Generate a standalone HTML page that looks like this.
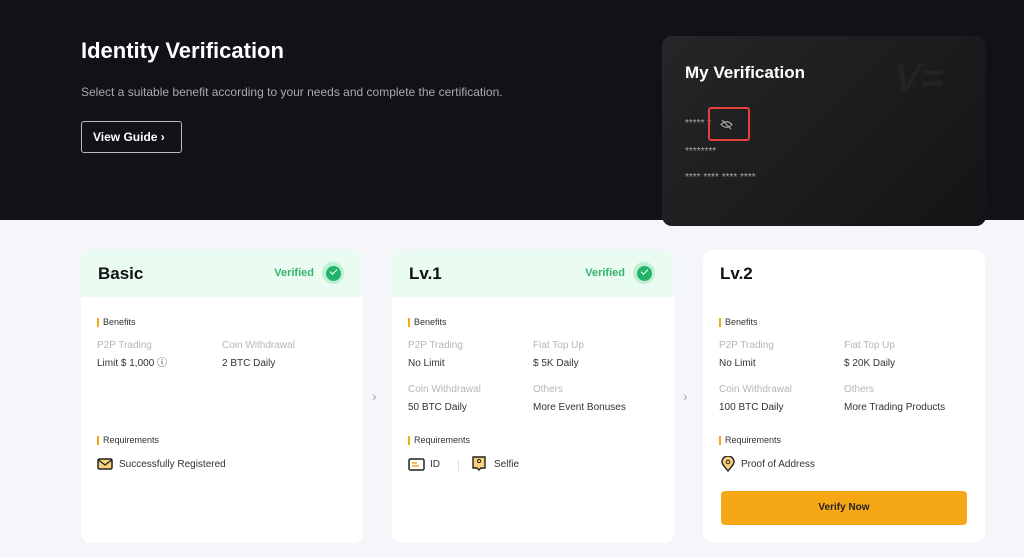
<!DOCTYPE html>
<html><head><meta charset="utf-8"><style>
*{box-sizing:border-box;margin:0;padding:0}
body{width:1024px;height:557px;overflow:hidden;background:#f5f6fa;font-family:"Liberation Sans",sans-serif;position:relative}
.hdr{position:absolute;left:0;top:0;width:1024px;height:220px;background:#111118;overflow:hidden}
.hdr h1{position:absolute;left:81px;top:38px;color:#fff;font-size:22px;font-weight:bold}
.hdr p{position:absolute;left:81px;top:85px;color:#a9a9b2;font-size:12px}
.btn{position:absolute;left:81px;top:121px;width:101px;height:32px;border:1px solid #bbb;border-radius:3px;color:#fff;font-size:12px;font-weight:bold;line-height:30px;padding-left:11px}
.mv{position:absolute;left:662px;top:36px;width:324px;height:190px;border-radius:10px;background:linear-gradient(135deg,#262628,#141416);color:#fff}
.mv h2{position:absolute;left:23px;top:27px;font-size:17px;font-weight:bold}
.st{position:absolute;left:23px;color:#aaa;font-size:10px;letter-spacing:0}
.card{position:absolute;top:250px;width:282px;height:293px;background:#fff;border-radius:10px;overflow:hidden}
.ch{height:47px;padding:14px 17px;font-size:17px;font-weight:bold;color:#111;position:relative}
.ch.g{background:#eafbf2}
.ver{position:absolute;right:19px;top:12px;color:#35b46f;font-size:11px;font-weight:bold;display:flex;align-items:center;gap:8px}
.ck{width:22px;height:22px;border-radius:50%;background:#bff0d4;display:flex;align-items:center;justify-content:center}
.ck i{width:15px;height:15px;border-radius:50%;background:#23b46a;display:block;position:relative}
.ck i:after{content:"";position:absolute;left:4px;top:3px;width:6px;height:3px;border-left:1.5px solid #fff;border-bottom:1.5px solid #fff;transform:rotate(-45deg)}
.lbl{position:absolute;left:16px;font-size:9px;color:#333;border-left:2px solid #f6a716;padding-left:4px;line-height:9px}
.k{position:absolute;font-size:10px;color:#b5b5bd;line-height:12px}
.v{position:absolute;font-size:10px;color:#333;line-height:12px}
.arr{position:absolute;top:388px;color:#aaa;font-size:14px}
.vbtn{position:absolute;left:18px;top:241px;width:246px;height:34px;background:#f6a716;border-radius:4px;font-size:10px;font-weight:bold;color:#222;text-align:center;line-height:34px}
</style></head><body>
<div class="hdr">
<svg width="1024" height="220" style="position:absolute;left:0;top:0" opacity="0.07"><g stroke="#888" stroke-width="0.5">
<path d="M200 0V220M205 0V220M210 0V220M215 0V220M220 0V220M225 0V220M230 0V220M235 0V220M240 0V220M245 0V220M250 0V220M255 0V220M260 0V220M265 0V220M270 0V220M275 0V220M280 0V220M285 0V220M290 0V220M295 0V220M300 0V220"/>
<path d="M300 220L520 20M308 220L528 20M316 220L536 20M324 220L544 20M332 220L552 20M340 220L560 20M348 220L568 20M356 220L576 20"/></g></svg>
<h1>Identity Verification</h1>
<p>Select a suitable benefit according to your needs and complete the certification.</p>
<div class="btn">View Guide ›</div>
</div>
<div class="mv"><h2>My Verification</h2>
<div style="position:absolute;left:232px;top:20px;font-size:40px;font-weight:bold;font-style:italic;color:#232325">V<span style="font-style:normal">=</span></div>
<div class="st" style="top:82px">***** *</div>
<svg style="position:absolute;left:58px;top:83px" width="13" height="11" viewBox="0 0 14 12"><path d="M1 6Q7 0 13 6Q7 12 1 6Z M2 1L12 11" fill="none" stroke="#aaa" stroke-width="1.2"/></svg>
<div style="position:absolute;left:46px;top:71px;width:42px;height:34px;border:2px solid #e5403c;border-radius:3px"></div>
<div class="st" style="top:110px">********</div>
<div class="st" style="top:136px">**** **** **** ****</div>
</div>

<div class="card" style="left:81px">
<div class="ch g">Basic<div class="ver">Verified<div class="ck"><i></i></div></div></div>
<div class="lbl" style="top:68px">Benefits</div>
<div class="k" style="left:16px;top:90px">P2P Trading</div><div class="v" style="left:16px;top:108px">Limit $ 1,000 ⓘ</div>
<div class="k" style="left:141px;top:90px">Coin Withdrawal</div><div class="v" style="left:141px;top:108px">2 BTC Daily</div>
<div class="lbl" style="top:186px">Requirements</div>
<svg style="position:absolute;left:16px;top:208px" width="16" height="12"><rect x="1" y="1" width="14" height="10" rx="1.5" fill="#fbd27a" stroke="#222" stroke-width="1.5"/><path d="M1.5 2L8 7L14.5 2" fill="none" stroke="#222" stroke-width="1.3"/></svg>
<div class="v" style="left:38px;top:209px">Successfully Registered</div>
</div>
<div class="arr" style="left:372px">›</div>

<div class="card" style="left:392px">
<div class="ch g">Lv.1<div class="ver">Verified<div class="ck"><i></i></div></div></div>
<div class="lbl" style="top:68px">Benefits</div>
<div class="k" style="left:16px;top:90px">P2P Trading</div><div class="v" style="left:16px;top:108px">No Limit</div>
<div class="k" style="left:141px;top:90px">Fiat Top Up</div><div class="v" style="left:141px;top:108px">$ 5K Daily</div>
<div class="k" style="left:16px;top:134px">Coin Withdrawal</div><div class="v" style="left:16px;top:152px">50 BTC Daily</div>
<div class="k" style="left:141px;top:134px">Others</div><div class="v" style="left:141px;top:152px">More Event Bonuses</div>
<div class="lbl" style="top:186px">Requirements</div>
<svg style="position:absolute;left:16px;top:208px" width="17" height="13"><rect x="1" y="1" width="15" height="11" rx="1.5" fill="#fff" stroke="#222" stroke-width="1.5"/><path d="M4 5H9M4 8H11" stroke="#f6a716" stroke-width="1.5"/></svg>
<div class="v" style="left:38px;top:209px">ID</div>
<div style="position:absolute;left:66px;top:210px;width:1px;height:11px;background:#ddd"></div>
<svg style="position:absolute;left:80px;top:206px" width="14" height="16"><path d="M1 1H13V12H9L7 14L5 12H1Z" fill="#fbd27a" stroke="#222" stroke-width="1.4"/><circle cx="7" cy="5" r="1.6" fill="none" stroke="#222"/></svg>
<div class="v" style="left:102px;top:209px">Selfie</div>
</div>
<div class="arr" style="left:683px">›</div>

<div class="card" style="left:703px">
<div class="ch">Lv.2</div>
<div class="lbl" style="top:68px">Benefits</div>
<div class="k" style="left:16px;top:90px">P2P Trading</div><div class="v" style="left:16px;top:108px">No Limit</div>
<div class="k" style="left:141px;top:90px">Fiat Top Up</div><div class="v" style="left:141px;top:108px">$ 20K Daily</div>
<div class="k" style="left:16px;top:134px">Coin Withdrawal</div><div class="v" style="left:16px;top:152px">100 BTC Daily</div>
<div class="k" style="left:141px;top:134px">Others</div><div class="v" style="left:141px;top:152px">More Trading Products</div>
<div class="lbl" style="top:186px">Requirements</div>
<svg style="position:absolute;left:18px;top:206px" width="14" height="16"><path d="M7 15C3 10 1 8 1 6A6 6 0 0 1 13 6C13 8 11 10 7 15Z" fill="#fbd27a" stroke="#222" stroke-width="1.4"/><circle cx="7" cy="6" r="1.8" fill="none" stroke="#222"/></svg>
<div class="v" style="left:38px;top:209px">Proof of Address</div>
<div class="vbtn">Verify Now</div>
</div>
</body></html>
